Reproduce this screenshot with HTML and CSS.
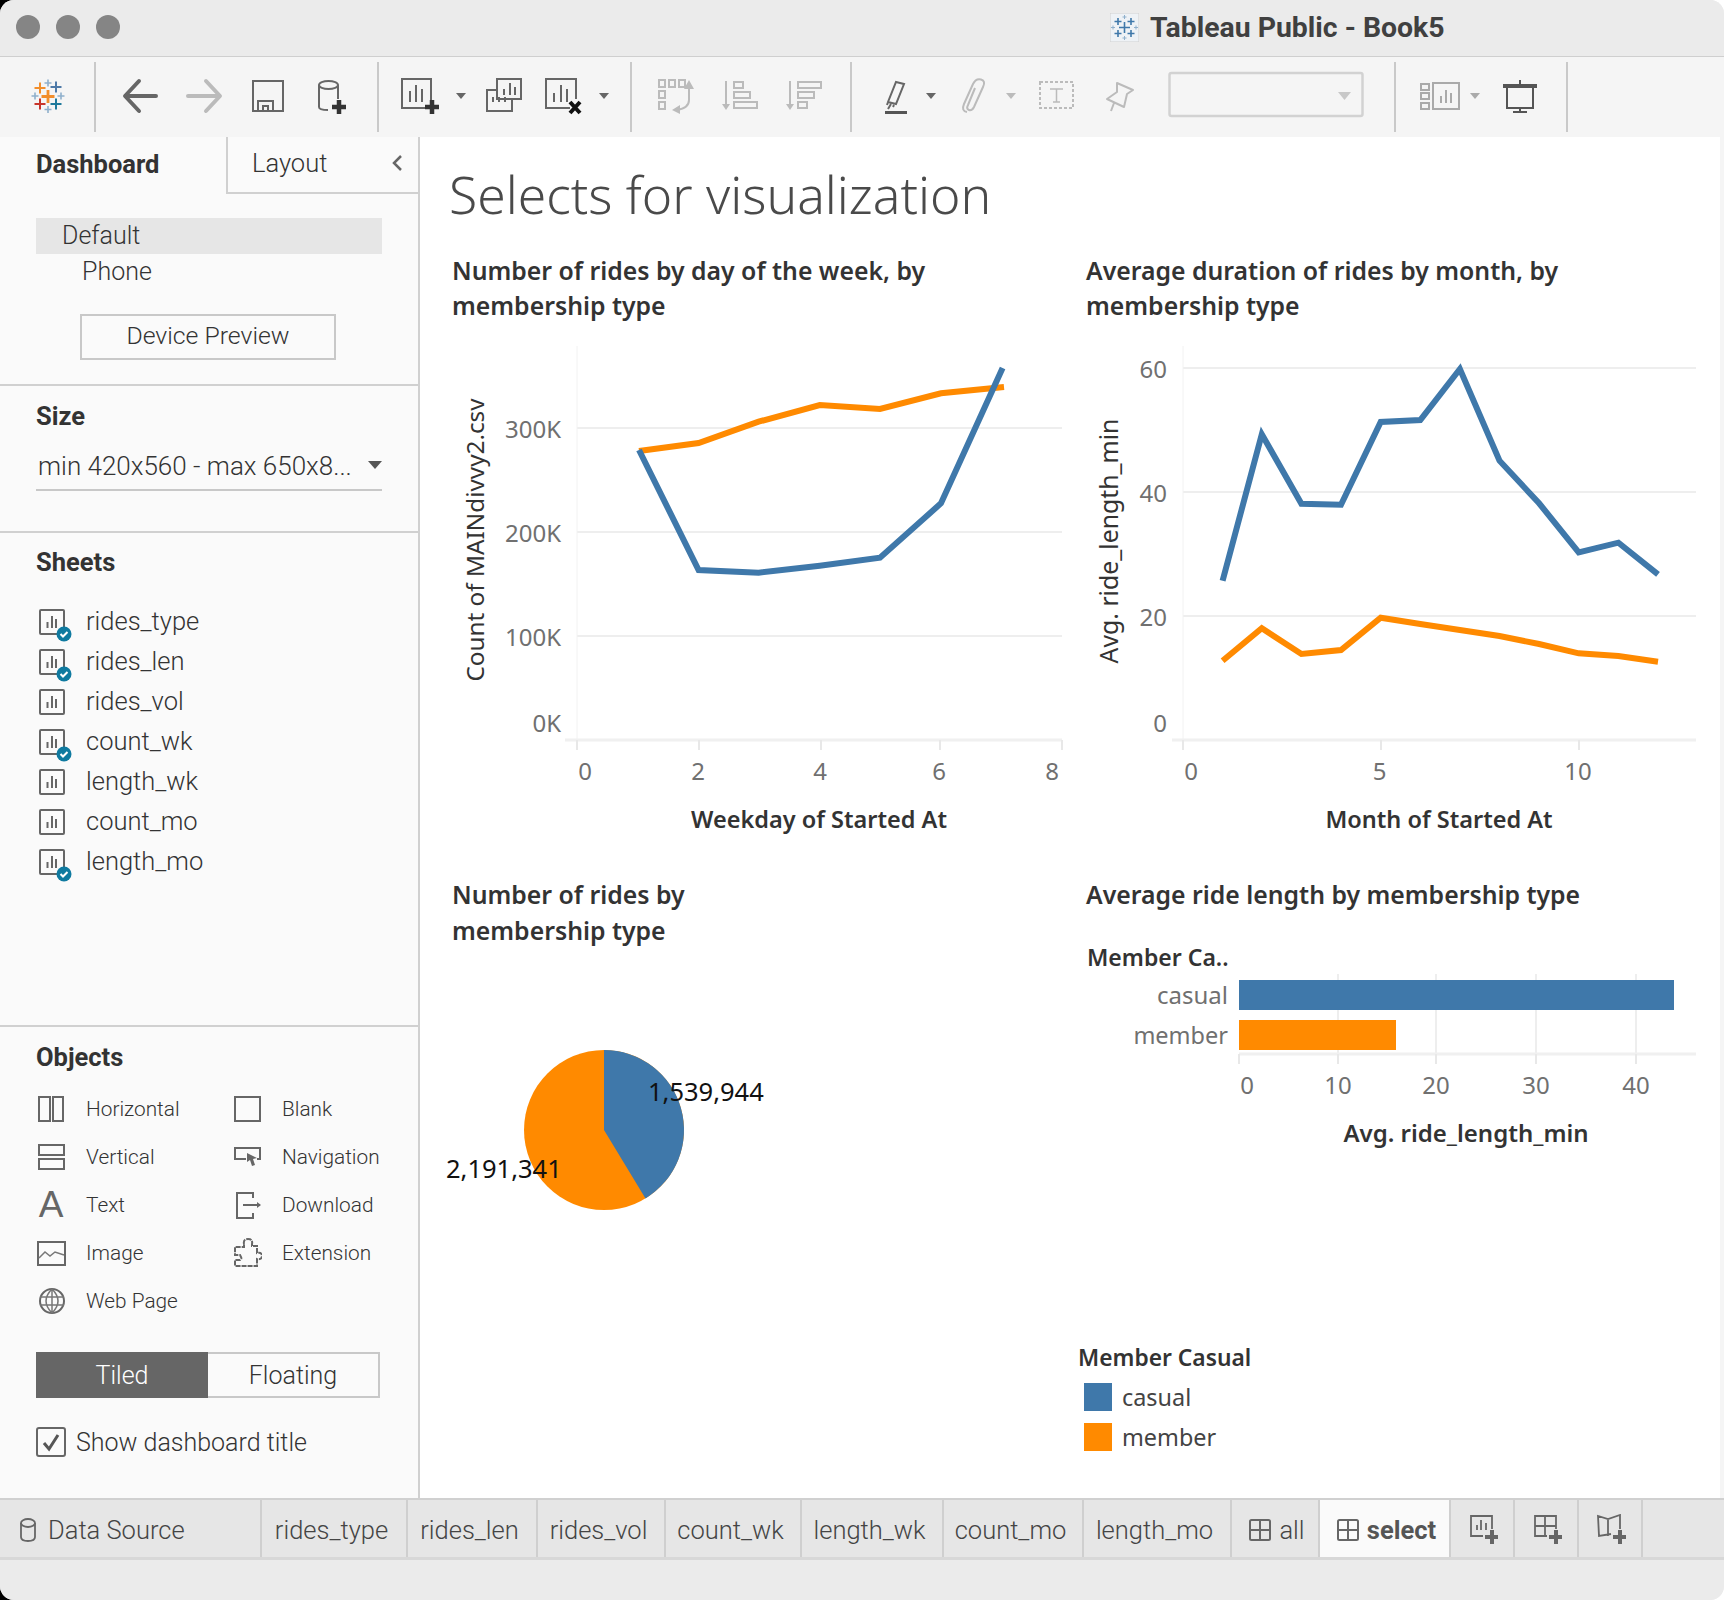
FILE: index.html
```html
<!DOCTYPE html>
<html lang="en">
<head>
<meta charset="utf-8">
<title>Tableau Public - Book5</title>
<link rel="stylesheet" href="styles.css">
</head>
<body>
<svg class="defs" xmlns="http://www.w3.org/2000/svg">
  <symbol id="sheet" viewBox="0 0 26 26"><rect x="1" y="1" width="24" height="24" rx="1" class="ln"/><path d="M8.500 19v-6M13 19V7M17 19V10" class="ln"/></symbol>
  <symbol id="dash" viewBox="0 0 22 22"><rect x="1" y="1" width="20" height="20" rx="1.500" class="ln"/><path d="M11 1v20M1 11h20" class="ln"/></symbol>
</svg>
<div class="window">
  <header class="titlebar">
    <div class="lights"><i class="light"></i><i class="light"></i><i class="light"></i></div>
    <div class="apptitle">
      <svg class="appicon" viewBox="0 0 29 29"><rect width="29" height="29" fill="#eef2f6" stroke="#d0d0d0"/><path d="M14.500 9v11M9 14.500h11M8 5v7M4.500 8.500h7M21 5v7M17.500 8.500h7M8 17v7M4.500 20.500h7M21 17v7M17.500 20.500h7" stroke="#3f78aa" stroke-width="1.600" fill="none"/><path d="M14.500 2v4M12.500 4h4M14.500 23v4M12.500 25h4M3 12.500v4M1 14.500h4M26 12.500v4M24 14.500h4" stroke="#8fb0cc" stroke-width="1" fill="none"/></svg>
      <span>Tableau Public - Book5</span>
    </div>
  </header>

  <div class="toolbar">
    <svg class="tb g1" viewBox="0 57 96 79">
      <g fill="none" stroke-width="2">
        <path stroke="#f28e2b" stroke-width="2.800" d="M48 90v13M41.500 96.500h13"/>
        <path stroke="#f28e2b" d="M40 82.500v11M34.500 88h11"/>
        <path stroke="#4e79a7" d="M56 81.500v11M50.500 87h11"/>
        <path stroke="#c8352b" d="M40 98.500v11M34.500 104h11"/>
        <path stroke="#1f7a9c" d="M56 98.500v11M50.500 104h11"/>
        <path stroke="#8fb0cc" stroke-width="1.600" d="M48 79.500v7M44.500 83h7M48 106v7M44.500 109.500h7M35 92.500v7M31.500 96h7M61 92.500v7M57.500 96h7"/>
      </g>
    </svg>
    <svg class="tb g2" viewBox="96 57 283 79">
      <path d="M156 96H126M139 81L125 96l14 15" fill="none" stroke="#666" stroke-width="4" stroke-linecap="round" stroke-linejoin="round"/>
      <path d="M188 96h31M206 81l14 15-14 15" fill="none" stroke="#bbb" stroke-width="4" stroke-linecap="round" stroke-linejoin="round"/>
      <path d="M253 81h30v30h-30zM258 111v-10h15v10M263 111v-5h5v5" fill="none" stroke="#666" stroke-width="2"/>
      <path d="M319 85v22q0 3 9 3M338 85v14" fill="none" stroke="#666" stroke-width="2"/><ellipse cx="328.500" cy="85" rx="9.500" ry="4" fill="none" stroke="#666" stroke-width="2"/>
      <path d="M339 100v14M332 107h14" stroke="#333" stroke-width="4.500"/>
    </svg>
    <svg class="tb g3" viewBox="379 57 253 79">
      <path d="M428 108h-26V79h29v22" fill="none" stroke="#666" stroke-width="2"/><path d="M410 102v-11M416 102V85M422 102v-13" stroke="#666" stroke-width="2"/>
      <path d="M432 100v14M425 107h14" stroke="#333" stroke-width="4.500"/>
      <path d="M456 93h10l-5 6z" fill="#666"/>
      <rect x="497" y="79" width="24" height="20" fill="none" stroke="#666" stroke-width="2"/><path d="M504 95v-6M510 95V83M515 95v-8" stroke="#666" stroke-width="2"/>
      <path d="M497 90h-10v21h25V99" fill="none" stroke="#666" stroke-width="2"/><path d="M493 97v5M499 97v5M505 97v5" stroke="#666" stroke-width="2"/>
      <path d="M570 108h-24V79h30v20" fill="none" stroke="#666" stroke-width="2"/><path d="M554 102v-9M561 102V85M567 102v-13" stroke="#666" stroke-width="2"/>
      <path d="M570 102l10 11M580 102l-10 11" stroke="#111" stroke-width="4"/>
      <path d="M599 93h10l-5 6z" fill="#666"/>
    </svg>
    <svg class="tb g4" viewBox="632 57 220 79">
      <g fill="none" stroke="#bbb" stroke-width="2">
        <rect x="659" y="80" width="6" height="7"/><rect x="669" y="80" width="6" height="7"/><rect x="679" y="80" width="6" height="7"/><rect x="659" y="91" width="6" height="7"/><rect x="659" y="102" width="6" height="7"/>
        <path d="M689 88v12q0 8-12 10"/>
        <path d="M726 81v24"/><rect x="734" y="82" width="9" height="6"/><rect x="734" y="92" width="16" height="6"/><rect x="734" y="102" width="23" height="6"/>
        <path d="M790 81v24"/><rect x="798" y="82" width="23" height="6"/><rect x="798" y="92" width="16" height="6"/><rect x="798" y="102" width="9" height="6"/>
      </g>
      <path d="M689 80l5 9h-10zM672 110l8-5v9zM722 104h8l-4 6zM786 104h8l-4 6z" fill="#bbb"/>
    </svg>
    <svg class="tb g5" viewBox="852 57 544 79">
      <path d="M896 82l8 2-8 20-8-2zM888 102l-1 3M891 104l-3 5M894 105l-1 2" fill="none" stroke="#666" stroke-width="2"/><rect x="885" y="111" width="22" height="3" fill="#555"/>
      <path d="M926 93h10l-5 6z" fill="#666"/>
      <path d="M975 88l-7 17q-2 4 1 5t5-3l9-20q3-6-2-7.500t-8 4.500l-9 20q-3 7 3 8" fill="none" stroke="#bbb" stroke-width="2"/>
      <path d="M1006 93h10l-5 6z" fill="#bbb"/>
      <rect x="1040" y="82" width="33" height="26" fill="none" stroke="#bbb" stroke-width="2" stroke-dasharray="3 2"/><path d="M1050 89h13M1056.500 89v13M1053 102h7" fill="none" stroke="#bbb" stroke-width="1.500"/>
      <path d="M1117 83l16 7-6 4-3 13-17-8 10-7zM1114 103l-3 8" fill="none" stroke="#bbb" stroke-width="2" stroke-linejoin="round"/>
      <rect x="1169.500" y="73" width="193" height="43" rx="2" fill="none" stroke="#d2d2d2" stroke-width="2.500"/>
      <path d="M1338 92h13l-6.500 8z" fill="#c8c8c8"/>
    </svg>
    <svg class="tb g6" viewBox="1396 57 172 79">
      <g fill="none" stroke="#aaa" stroke-width="2"><rect x="1421" y="84" width="8" height="6"/><rect x="1421" y="93" width="8" height="6"/><rect x="1421" y="103" width="8" height="6"/><rect x="1433" y="83" width="26" height="26"/><path d="M1441 103v-7M1446 103V90M1451 103v-10"/></g>
      <path d="M1470 93h10l-5 6z" fill="#aaa"/>
      <path d="M1520 80v4" stroke="#555" stroke-width="2"/><rect x="1503" y="84" width="34" height="4" fill="#555"/><path d="M1507 87v21h26V87M1520 108v5M1513 112h14" fill="none" stroke="#555" stroke-width="2"/>
    </svg>
  </div>

  <main class="main">
    <aside class="sidebar">
      <div class="sidetabs">
        <div class="sidetab active">Dashboard</div>
        <div class="sidetab">Layout<svg class="chev" viewBox="0 0 12 18"><path d="M10 2L3 9l7 7" fill="none" stroke="#666" stroke-width="2.500"/></svg></div>
      </div>
      <section class="sec sec-device">
        <div class="dev-row selected">Default</div>
        <div class="dev-row phone">Phone</div>
        <button class="btn">Device Preview</button>
      </section>
      <section class="sec sec-size">
        <h2>Size</h2>
        <div class="sizesel"><span>min 420x560 - max 650x8...</span><i class="caret"></i></div>
      </section>
      <section class="sec sec-sheets">
        <h2>Sheets</h2>
        <ul class="sheets">
          <li><span class="sicon"><svg><use href="#sheet"/></svg><svg class="badge" viewBox="0 0 16 16"><circle cx="8" cy="8" r="7.500" fill="#0f7aa0"/><path d="M4.500 8l2.500 2.500 4.500-4.500" fill="none" stroke="#fff" stroke-width="2"/></svg></span>rides_type</li>
          <li><span class="sicon"><svg><use href="#sheet"/></svg><svg class="badge" viewBox="0 0 16 16"><circle cx="8" cy="8" r="7.500" fill="#0f7aa0"/><path d="M4.500 8l2.500 2.500 4.500-4.500" fill="none" stroke="#fff" stroke-width="2"/></svg></span>rides_len</li>
          <li><span class="sicon"><svg><use href="#sheet"/></svg></span>rides_vol</li>
          <li><span class="sicon"><svg><use href="#sheet"/></svg><svg class="badge" viewBox="0 0 16 16"><circle cx="8" cy="8" r="7.500" fill="#0f7aa0"/><path d="M4.500 8l2.500 2.500 4.500-4.500" fill="none" stroke="#fff" stroke-width="2"/></svg></span>count_wk</li>
          <li><span class="sicon"><svg><use href="#sheet"/></svg></span>length_wk</li>
          <li><span class="sicon"><svg><use href="#sheet"/></svg></span>count_mo</li>
          <li><span class="sicon"><svg><use href="#sheet"/></svg><svg class="badge" viewBox="0 0 16 16"><circle cx="8" cy="8" r="7.500" fill="#0f7aa0"/><path d="M4.500 8l2.500 2.500 4.500-4.500" fill="none" stroke="#fff" stroke-width="2"/></svg></span>length_mo</li>
        </ul>
      </section>
      <section class="sec sec-objects">
        <h2>Objects</h2>
        <div class="objects">
          <div class="obj"><svg class="oi" viewBox="0 0 30 30"><path d="M3 3h11v24H3zM17 3h10v24H17z" class="ln2"/></svg>Horizontal</div>
          <div class="obj"><svg class="oi" viewBox="0 0 30 30"><path d="M3 3h25v24H3z" class="ln2"/></svg>Blank</div>
          <div class="obj"><svg class="oi" viewBox="0 0 30 30"><path d="M3 3h25v10H3zM3 17h25v10H3z" class="ln2"/></svg>Vertical</div>
          <div class="obj"><svg class="oi" viewBox="0 0 30 30"><path d="M14 17H3V6h25v11h-3" class="ln2"/><path d="M15 11l10 5-4 1 2 6-3 1-2-6-3 2z" fill="#666"/></svg>Navigation</div>
          <div class="obj"><span class="oi glyph">A</span>Text</div>
          <div class="obj"><svg class="oi" viewBox="0 0 30 30"><path d="M21 8V3H5v25h16v-5M11 15h17" class="ln2"/><path d="M25 12l4 3-4 3z" fill="#666"/></svg>Download</div>
          <div class="obj"><svg class="oi" viewBox="0 0 30 30"><path d="M2 4h27v23H2z" class="ln2"/><path d="M3 20l6-6 5 4 5-4 9 3" fill="none" stroke="#777" stroke-width="1.500"/></svg>Image</div>
          <div class="obj"><svg class="oi" viewBox="0 0 30 30"><path d="M12 6q-1-5 4-5t4 5v2h5v7q5-1 5 3t-5 3v7H3v-6h5q2-1 1-3t-1-2H3V9h9z" class="ln2" stroke-dasharray="5 1"/></svg>Extension</div>
          <div class="obj"><svg class="oi" viewBox="0 0 30 30"><circle cx="16" cy="15" r="12" class="ln2"/><path d="M4 11h24M4 19h24M16 3v24M16 3q-12 12 0 24M16 3q12 12 0 24" fill="none" stroke="#777" stroke-width="1.500"/></svg>Web Page</div>
        </div>
        <div class="seg"><span class="seg-on">Tiled</span><span class="seg-off">Floating</span></div>
        <label class="check"><svg class="cb" viewBox="0 0 30 30"><rect x="1" y="1" width="28" height="28" rx="2" class="ln2"/><path d="M8 16l5 6 9-14" fill="none" stroke="#555" stroke-width="3"/></svg>Show dashboard title</label>
      </section>
    </aside>

    <section class="dash">
      <h1>Selects for visualization</h1>
      <div class="dgrid">
        <article class="cell">
          <h3>Number of rides by day of the week, by membership type</h3>
          <svg class="plot" width="634" height="555" viewBox="452 323 634 555">
            <path class="grid" d="M577 428h485M577 532h485M577 636h485"/>
            <path class="vaxis" d="M577 346v394"/>
            <path class="axis" d="M565 740h497"/>
            <path class="tick" d="M577 740v10M699 740v10M821 740v10M940 740v10M1062 740v10"/>
            <text class="tlab end" x="561" y="438">300K</text>
            <text class="tlab end" x="561" y="542">200K</text>
            <text class="tlab end" x="561" y="646">100K</text>
            <text class="tlab end" x="561" y="732">0K</text>
            <text class="tlab mid" x="585" y="780">0</text>
            <text class="tlab mid" x="698" y="780">2</text>
            <text class="tlab mid" x="820" y="780">4</text>
            <text class="tlab mid" x="939" y="780">6</text>
            <text class="tlab mid" x="1052" y="780">8</text>
            <text class="atitle mid" x="819" y="828">Weekday of Started At</text>
            <text class="vtitle mid" transform="translate(484 540) rotate(-90)">Count of MAINdivvy2.csv</text>
            <polyline class="ln-o" points="639,451 698.600,443 758.600,421.700 819.800,405 880,409 941,393.300 1004,387"/>
            <polyline class="ln-b" points="639,450 698.600,570 758.600,572.700 819.800,565.700 880,557.700 941,503.300 1002.600,368"/>
          </svg>
        </article>
        <article class="cell">
          <h3>Average duration of rides by month, by membership type</h3>
          <svg class="plot" width="634" height="555" viewBox="1086 323 634 555">
            <path class="grid" d="M1183 368h513M1183 492h513M1183 616h513"/>
            <path class="vaxis" d="M1183 346v394"/>
            <path class="axis" d="M1172 740h524"/>
            <path class="tick" d="M1183 740v10M1381 740v10M1579 740v10"/>
            <text class="tlab end" x="1167" y="378">60</text>
            <text class="tlab end" x="1167" y="502">40</text>
            <text class="tlab end" x="1167" y="626">20</text>
            <text class="tlab end" x="1167" y="732">0</text>
            <text class="tlab mid" x="1191" y="780">0</text>
            <text class="tlab mid" x="1379.500" y="780">5</text>
            <text class="tlab mid" x="1578" y="780">10</text>
            <text class="atitle mid" x="1439" y="828">Month of Started At</text>
            <text class="vtitle long mid" transform="translate(1118 541) rotate(-90)">Avg. ride_length_min</text>
            <polyline class="ln-b" points="1222.600,580.700 1261.800,434.300 1301.400,503.700 1341,504.700 1380.700,422 1420.300,420 1459.900,369 1499.500,460.700 1539.100,503.300 1578.700,552.300 1618.400,542.700 1658,574.300"/>
            <polyline class="ln-o" points="1222.600,660.700 1261.800,628.300 1301.400,654 1341,650 1380.700,617.700 1420.300,624 1459.900,630 1499.500,636 1539.100,644 1578.700,653.300 1618.400,656 1658,661.700"/>
          </svg>
        </article>
        <article class="cell r2">
          <h3 class="narrow">Number of rides by membership type</h3>
          <svg class="plot pie" width="400" height="300" viewBox="452 948 400 300">
            <circle cx="604" cy="1130" r="80" fill="#ff8a00"/>
            <path d="M604 1130V1050A80 80 0 0 1 645.500 1198.400Z" fill="#3f78aa"/>
            <text class="plab" x="648" y="1101">1,539,944</text>
            <text class="plab" x="446" y="1178">2,191,341</text>
          </svg>
        </article>
        <article class="cell r2">
          <h3>Average ride length by membership type</h3>
          <svg class="plot" width="634" height="240" viewBox="1086 913 634 240">
            <path class="grid" d="M1338 974v80M1436 974v80M1536 974v80M1636 974v80"/>
            <rect x="1239" y="980" width="435" height="30" fill="#3f78aa"/>
            <rect x="1239" y="1020" width="157" height="30" fill="#ff8a00"/>
            <path class="axis" d="M1239 1054h457"/>
            <path class="tick" d="M1239 1054v10M1338 1054v10M1436 1054v10M1536 1054v10M1636 1054v10"/>
            <text class="hlab" x="1087" y="966">Member Ca..</text>
            <text class="tlab end" x="1228" y="1004">casual</text>
            <text class="tlab end small" x="1228" y="1044">member</text>
            <text class="tlab mid" x="1247" y="1094">0</text>
            <text class="tlab mid" x="1338" y="1094">10</text>
            <text class="tlab mid" x="1436" y="1094">20</text>
            <text class="tlab mid" x="1536" y="1094">30</text>
            <text class="tlab mid" x="1636" y="1094">40</text>
            <text class="atitle wide mid" x="1466" y="1142">Avg. ride_length_min</text>
          </svg>
          <div class="legend">
            <div class="leg-title">Member Casual</div>
            <div class="leg-row"><i class="sw sw-b"></i>casual</div>
            <div class="leg-row"><i class="sw sw-o"></i>member</div>
          </div>
        </article>
      </div>
    </section>
  </main>

  <nav class="tabs">
    <div class="tab t-ds"><svg class="tabi-db" viewBox="0 0 16 24"><path d="M1 5v14q0 4 7 4t7-4V5" fill="none" stroke="#666" stroke-width="1.800"/><ellipse cx="8" cy="5" rx="7" ry="4" fill="none" stroke="#666" stroke-width="1.800"/></svg>Data Source</div>
    <div class="tab t1">rides_type</div>
    <div class="tab t2">rides_len</div>
    <div class="tab t3">rides_vol</div>
    <div class="tab t4">count_wk</div>
    <div class="tab t5">length_wk</div>
    <div class="tab t6">count_mo</div>
    <div class="tab t7">length_mo</div>
    <div class="tab t8"><svg class="tabi"><use href="#dash"/></svg>all</div>
    <div class="tab t9 current"><svg class="tabi"><use href="#dash"/></svg>select</div>
    <div class="tab tadd"><svg class="addi" viewBox="0 0 30 30"><path d="M15 22H3V2h21v13M9 16v-5M13 16V6M18 16V9" fill="none" stroke="#666" stroke-width="1.800"/><path d="M24 16v14M17 23h14" stroke="#666" stroke-width="4"/></svg></div>
    <div class="tab tadd"><svg class="addi" viewBox="0 0 30 30"><path d="M15 22H3V2h21v13M3 12h21M13 2v20" fill="none" stroke="#666" stroke-width="1.800"/><path d="M24 16v14M17 23h14" stroke="#666" stroke-width="4"/></svg></div>
    <div class="tab tadd"><svg class="addi" viewBox="0 0 30 30"><path d="M15 20l-12 2-1-20 10 3 12-4v14M12 5v17" fill="none" stroke="#666" stroke-width="1.800"/><path d="M24 16v14M17 23h14" stroke="#666" stroke-width="4"/></svg></div>
  </nav>
  <footer class="status"></footer>
</div>
</body>
</html>
```
FILE: styles.css
```css
* { box-sizing: border-box; }
html, body { margin: 0; padding: 0; }
body { width: 1724px; height: 1600px; background: linear-gradient(to right, #000 50%, #fff 50%); font-family: "Noto Sans", "Open Sans", sans-serif; color: #333; overflow: hidden; }
.defs { display: none; }
.ln { fill: none; stroke: #666; stroke-width: 2; }
.ln2 { fill: none; stroke: #666; stroke-width: 2; }

.window { width: 1724px; height: 1600px; display: flex; flex-direction: column; border-radius: 14px; overflow: hidden; background: #ebebeb; }

.titlebar { flex: none; height: 57px; display: flex; align-items: center; background: #ebebeb; border-bottom: 1px solid #cfcfcf; padding-left: 16px; padding-bottom: 2px; }
.lights { display: flex; gap: 16px; }
.light { width: 24px; height: 24px; border-radius: 50%; background: #858585; display: block; }
.apptitle { display: flex; align-items: center; gap: 11px; margin-left: 990px; font-family: Roboto, sans-serif; font-weight: 700; font-size: 28.400px; color: #404040; }
.appicon { width: 29px; height: 29px; }

.toolbar { flex: none; height: 80px; display: flex; background: #f5f5f5; padding-bottom: 1px; }
.tb { display: block; height: 79px; flex: none; }
.g1 { width: 96px; } .g2 { width: 283px; } .g3 { width: 253px; } .g4 { width: 220px; } .g5 { width: 544px; } .g6 { width: 172px; }
.toolbar .tb { background: linear-gradient(#c9c9c9, #c9c9c9) right center / 2px 70px no-repeat; }

.main { flex: none; height: 1361px; display: flex; background: #f5f5f5; }
.sidebar { flex: none; width: 420px; background: #fafafa; border-right: 2px solid #d0d0d0; display: flex; flex-direction: column; font-family: Roboto, sans-serif; font-weight: 300; }
.sidetabs { flex: none; height: 57px; display: flex; }
.sidetab { font-size: 25.500px; display: flex; align-items: center; height: 57px; padding-bottom: 3px; }
.sidetab.active { width: 226px; padding-left: 36px; font-weight: 700; font-size: 25.500px; color: #333; }
.sidetab:not(.active) { flex: 1; padding-left: 24px; border-left: 2px solid #d0d0d0; border-bottom: 2px solid #d0d0d0; justify-content: space-between; padding-right: 15px; color: #333; }
.chev { width: 12px; height: 18px; }

.sec { flex: none; border-bottom: 2px solid #d0d0d0; padding-left: 36px; padding-right: 36px; }
.sec h2 { margin: 0; font-size: 25.500px; font-weight: 700; color: #333; line-height: 30px; }
.sec-device { height: 192px; padding-top: 24px; }
.dev-row { height: 36px; line-height: 36px; font-size: 25px; color: #333; padding-left: 26px; }
.dev-row.selected { background: #e6e6e6; }
.dev-row.phone { padding-left: 46px; }
.btn { display: block; width: 256px; height: 46px; margin: 24px 0 0 44px; padding: 0 0 3px; background: #fafafa; border: 2px solid #c8c8c8; font: 300 24.800px Roboto, sans-serif; color: #333; }
.sec-size { height: 147px; padding-top: 15px; }
.sizesel { margin-top: 16px; height: 44px; display: flex; align-items: center; justify-content: space-between; border-bottom: 2px solid #c8c8c8; font-size: 26px; color: #333; padding: 0 0 4px 2px; white-space: nowrap; }
.caret { width: 0; height: 0; border-left: 7px solid transparent; border-right: 7px solid transparent; border-top: 8px solid #555; margin-bottom: 2px; }
.sec-sheets { height: 494px; padding-top: 14px; padding-right: 0; }
.sheets { list-style: none; margin: 24px 0 0; padding: 0; }
.sheets li { height: 40px; display: flex; align-items: center; font-size: 25.500px; color: #333; }
.sicon { width: 50px; height: 40px; flex: none; position: relative; padding-left: 3px; padding-top: 8px; }
.sicon > svg:first-child { display: block; width: 26px; height: 26px; }
.badge { position: absolute; left: 20px; top: 25px; width: 16px; height: 16px; }

.sec-objects { flex: 1; border-bottom: 0; padding-top: 15px; }
.objects { display: grid; grid-template-columns: 196px 1fr; grid-auto-rows: 48px; margin-top: 13px; }
.obj { display: flex; align-items: center; font-size: 20.800px; color: #333; white-space: nowrap; }
.oi { flex: none; width: 30px; height: 30px; margin-right: 20px; }
.glyph { font: 37px/30px "Liberation Sans", sans-serif; color: #666; text-align: center; }
.seg { display: flex; margin-top: 27px; width: 344px; height: 46px; font-size: 25px; }
.seg-on, .seg-off { display: flex; align-items: center; justify-content: center; }
.seg-on { width: 172px; background: #666; color: #fff; }
.seg-off { flex: 1; border: 2px solid #c8c8c8; border-left: 0; color: #333; }
.check { display: flex; align-items: center; gap: 10px; margin-top: 29px; font-size: 25px; color: #333; }
.cb { width: 30px; height: 30px; flex: none; }

.dash { width: 1300px; flex: none; background: #fff; padding: 27px 0 0 32px; }
.dash h1 { margin: 0 0 29px -3px; height: 60px; font-size: 51.600px; line-height: 60px; font-weight: 300; color: #4a4a4a; font-family: "Noto Sans", sans-serif; }
.dgrid { display: grid; grid-template-columns: 634px 634px; grid-template-rows: 625px auto; }
.cell h3 { margin: 0; max-width: 520px; font-size: 24.800px; line-height: 35px; font-weight: 600; color: #333; }
.cell.r2 h3 { margin-top: -2px; line-height: 36px; height: 72px; }
.cell.r2 h3:not(.narrow) { height: 37px; }
.cell h3.narrow { width: 300px; }
.plot { display: block; }
.pie { overflow: visible; }
.grid { fill: none; stroke: #eeeeee; stroke-width: 2; }
.vaxis { fill: none; stroke: #f2f2f2; stroke-width: 1; }
.axis { fill: none; stroke: #f0f0f0; stroke-width: 3; }
.tick { fill: none; stroke: #e8e8e8; stroke-width: 2; }
.ln-b, .ln-o { fill: none; stroke-width: 6; stroke-linejoin: miter; }
.ln-b { stroke: #3f78aa; }
.ln-o { stroke: #ff8a00; }
.tlab { font-size: 24px; fill: #707070; }
.tlab.small { font-size: 23.500px; }
.atitle { font-size: 23.500px; fill: #333; font-weight: 600; }
.atitle.wide { font-size: 24px; }
.hlab { font-size: 23px; fill: #333; font-weight: 600; }
.vtitle { font-size: 24.300px; fill: #333; }
.vtitle.long { font-size: 24.800px; }
.mid { text-anchor: middle; }
.end { text-anchor: end; }
.plab { font-size: 25.500px; fill: #111; }

.legend { margin: 188px 0 0 -8px; }
.leg-title { height: 36px; line-height: 34px; font-size: 22.800px; font-weight: 600; color: #333; }
.leg-row { height: 40px; display: flex; align-items: center; font-size: 23.400px; color: #444; padding-left: 6px; }
.sw { width: 28px; height: 28px; margin-right: 10px; display: block; }
.sw-b { background: #3f78aa; }
.sw-o { background: #ff8a00; }

.tabs { flex: none; height: 62px; display: flex; background: #e6e6e6; border-top: 2px solid #d0d0d0; border-bottom: 3px solid #d8d8d8; font-family: Roboto, sans-serif; }
.tab { flex: none; display: flex; align-items: center; justify-content: center; height: 100%; padding: 2px 5px 0 0; font-size: 25.500px; font-weight: 300; color: #444; border-right: 2px solid #cfcfcf; white-space: nowrap; }
.t-ds { width: 262px; justify-content: flex-start; padding-left: 20px; }
.tabi-db { width: 16px; height: 24px; margin-right: 12px; }
.t1 { width: 146px; } .t2 { width: 130px; } .t3 { width: 128px; } .t4 { width: 136px; } .t5 { width: 142px; } .t6 { width: 140px; } .t7 { width: 148px; } .t8 { width: 88px; padding: 2px 0 0 4px; } .t9 { width: 131px; padding: 2px 0 0 4px; }
.tabi { width: 22px; height: 22px; margin-right: 8px; }
.current { background: #fafafa; font-weight: 700; color: #555; }
.tadd { width: 64px; padding: 0 0 0 2px; }
.addi { width: 30px; height: 30px; }
.status { flex: 1; background: #ebebeb; }
```
